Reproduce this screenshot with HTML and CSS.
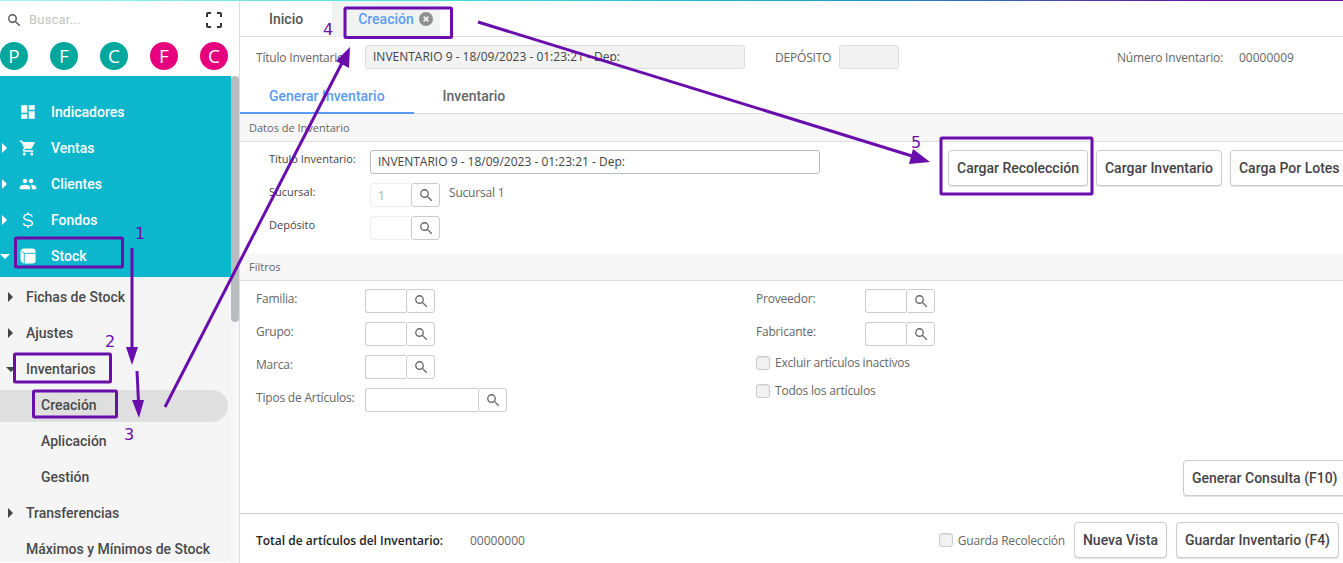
FILE: index.html
```html
<!DOCTYPE html>
<html lang="es">
<head>
<meta charset="utf-8">
<title>Creación de Inventario</title>
<link rel="stylesheet" href="styles.css">
</head>
<body>
<div class="topline"></div>
<div class="shell">
  <aside class="sidebar">
    <div class="side-col">
      <div class="search">
        <svg class="search-ico" viewBox="0 0 16 16"><circle cx="6.3" cy="6.3" r="4.3"/><path d="M9.6 9.6l5 5"/></svg>
        <span class="search-text">Buscar...</span>
        <svg class="full-ico" viewBox="0 0 16 16"><path d="M1 5V2a1 1 0 0 1 1-1h3M11 1h3a1 1 0 0 1 1 1v3M15 11v3a1 1 0 0 1-1 1h-3M5 15H2a1 1 0 0 1-1-1v-3"/></svg>
      </div>
      <div class="avatars">
        <span class="avatar teal">P</span>
        <span class="avatar teal">F</span>
        <span class="avatar teal">C</span>
        <span class="avatar pink">F</span>
        <span class="avatar pink">C</span>
      </div>
      <nav class="menu">
        <a class="mi"><svg class="mi-ico" viewBox="0 0 24 24"><path d="M3 13h8V3H3v10zm0 8h8v-6H3v6zm10 0h8V11h-8v10zm0-18v6h8V3h-8z"/></svg>Indicadores</a>
        <a class="mi"><i class="caret"></i><svg class="mi-ico" viewBox="0 0 24 24"><path d="M7 18c-1.1 0-1.99.9-1.99 2S5.9 22 7 22s2-.9 2-2-.9-2-2-2zM1 2v2h2l3.6 7.59-1.35 2.45c-.16.28-.25.61-.25.96 0 1.1.9 2 2 2h12v-2H7.42c-.14 0-.25-.11-.25-.25l.03-.12.9-1.63h7.45c.75 0 1.41-.41 1.75-1.03l3.58-6.49c.08-.14.12-.31.12-.48 0-.55-.45-1-1-1H5.21l-.94-2H1zm16 16c-1.1 0-1.99.9-1.99 2s.89 2 1.99 2 2-.9 2-2-.9-2-2-2z"/></svg>Ventas</a>
        <a class="mi"><i class="caret"></i><svg class="mi-ico" viewBox="0 0 24 24"><path d="M16 11c1.66 0 2.99-1.34 2.99-3S17.66 5 16 5c-1.66 0-3 1.34-3 3s1.34 3 3 3zm-8 0c1.66 0 2.99-1.34 2.99-3S9.66 5 8 5C6.34 5 5 6.34 5 8s1.34 3 3 3zm0 2c-2.33 0-7 1.17-7 3.5V19h14v-2.5c0-2.33-4.67-3.5-7-3.5zm8 0c-.29 0-.62.02-.97.05 1.16.84 1.97 1.97 1.97 3.45V19h6v-2.5c0-2.33-4.67-3.5-7-3.5z"/></svg>Clientes</a>
        <a class="mi"><i class="caret"></i><svg class="mi-ico dollar" viewBox="0 0 24 24"><path d="M17.500 7.500C17 5.500 15 4.500 12 4.500c-3.300 0-5.500 1.700-5.500 4 0 5 11.500 2.500 11.500 7.500 0 2.300-2.500 3.800-6 3.800-3.200 0-5.500-1.300-6-3.600M12 1.500v3M12 19.800v2.900"/></svg>Fondos</a>
        <a class="mi"><i class="caret down"></i><svg class="mi-ico" viewBox="0 0 24 24"><path d="M7 2h11a4 4 0 0 1 4 4v12a4 4 0 0 1-4 4H8a6 6 0 0 1-6-6V7a5 5 0 0 1 5-5z"/><path class="cube-line" d="M3 5l4 3.500h15M7 8.500V22"/></svg>Stock</a>
      </nav>
      <nav class="submenu">
        <a class="si"><i class="caret dark"></i>Fichas de Stock</a>
        <a class="si"><i class="caret dark"></i>Ajustes</a>
        <a class="si"><i class="caret dark down"></i>Inventarios</a>
        <a class="si child active">Creación</a>
        <a class="si child">Aplicación</a>
        <a class="si child">Gestión</a>
        <a class="si"><i class="caret dark"></i>Transferencias</a>
        <a class="si">Máximos y Mínimos de Stock</a>
      </nav>
    </div>
    <div class="scroll-col">
      <div class="scroll-thumb"></div>
    </div>
  </aside>

  <main class="main">
    <div class="tabs">
      <span class="tab">Inicio</span>
      <span class="tab current">Creación<svg class="close" viewBox="0 0 14 14"><circle cx="7" cy="7" r="7"/><path d="M4.6 4.6l4.8 4.8M9.4 4.6l-4.8 4.8"/></svg></span>
    </div>

    <div class="head">
      <span class="lbl head-lbl">Título Inventario:</span>
      <span class="ro-input title-input">INVENTARIO 9 - 18/09/2023 - 01:23:21 - Dep:</span>
      <span class="lbl dep-lbl">DEPÓSITO</span>
      <span class="ro-input dep-input"></span>
      <span class="lbl num-lbl">Número Inventario:</span>
      <span class="lbl num">00000009</span>
    </div>

    <div class="subtabs">
      <span class="subtab on">Generar Inventario</span>
      <span class="subtab">Inventario</span>
    </div>

    <div class="sec-title">Datos de Inventario</div>
    <section class="datos">
      <div class="datos-form">
        <div class="frow">
          <span class="dlbl">Título Inventario:</span>
          <span class="txt-input wide">INVENTARIO 9 - 18/09/2023 - 01:23:21 - Dep:</span>
        </div>
        <div class="frow">
          <span class="dlbl">Sucursal:</span>
          <span class="lookup soft"><span class="lk-in">1</span><span class="lk-btn"><svg class="mag" viewBox="0 0 16 16"><circle cx="6.3" cy="6.3" r="4.3"/><path d="M9.6 9.6l5 5"/></svg></span></span>
          <span class="lbl suc-name">Sucursal 1</span>
        </div>
        <div class="frow">
          <span class="dlbl">Depósito</span>
          <span class="lookup soft"><span class="lk-in"></span><span class="lk-btn"><svg class="mag" viewBox="0 0 16 16"><circle cx="6.3" cy="6.3" r="4.3"/><path d="M9.6 9.6l5 5"/></svg></span></span>
        </div>
      </div>
      <div class="datos-btns">
        <button class="btn">Cargar Recolección</button>
        <button class="btn">Cargar Inventario</button>
        <button class="btn">Carga Por Lotes</button>
      </div>
    </section>

    <div class="sec-title filtros-title">Filtros</div>
    <section class="filtros">
      <div class="fcol left">
        <div class="frow"><span class="flbl">Familia:</span><span class="lookup"><span class="lk-in"></span><span class="lk-btn"><svg class="mag" viewBox="0 0 16 16"><circle cx="6.3" cy="6.3" r="4.3"/><path d="M9.6 9.6l5 5"/></svg></span></span></div>
        <div class="frow"><span class="flbl">Grupo:</span><span class="lookup"><span class="lk-in"></span><span class="lk-btn"><svg class="mag" viewBox="0 0 16 16"><circle cx="6.3" cy="6.3" r="4.3"/><path d="M9.6 9.6l5 5"/></svg></span></span></div>
        <div class="frow"><span class="flbl">Marca:</span><span class="lookup"><span class="lk-in"></span><span class="lk-btn"><svg class="mag" viewBox="0 0 16 16"><circle cx="6.3" cy="6.3" r="4.3"/><path d="M9.6 9.6l5 5"/></svg></span></span></div>
        <div class="frow"><span class="flbl">Tipos de Artículos:</span><span class="lookup long"><span class="lk-in"></span><span class="lk-btn"><svg class="mag" viewBox="0 0 16 16"><circle cx="6.3" cy="6.3" r="4.3"/><path d="M9.6 9.6l5 5"/></svg></span></span></div>
      </div>
      <div class="fcol">
        <div class="frow"><span class="flbl">Proveedor:</span><span class="lookup"><span class="lk-in"></span><span class="lk-btn"><svg class="mag" viewBox="0 0 16 16"><circle cx="6.3" cy="6.3" r="4.3"/><path d="M9.6 9.6l5 5"/></svg></span></span></div>
        <div class="frow"><span class="flbl">Fabricante:</span><span class="lookup"><span class="lk-in"></span><span class="lk-btn"><svg class="mag" viewBox="0 0 16 16"><circle cx="6.3" cy="6.3" r="4.3"/><path d="M9.6 9.6l5 5"/></svg></span></span></div>
        <div class="check-row"><i class="check"></i><span class="lbl">Excluir artículos inactivos</span></div>
        <div class="check-row second"><i class="check"></i><span class="lbl">Todos los artículos</span></div>
      </div>
    </section>

    <div class="consulta"><button class="btn">Generar Consulta (F10)</button></div>

    <footer class="foot">
      <strong class="total">Total de artículos del Inventario:</strong>
      <span class="lbl num">00000000</span>
      <span class="foot-right">
        <i class="check"></i><span class="lbl guarda">Guarda Recolección</span>
        <button class="btn">Nueva Vista</button>
        <button class="btn">Guardar Inventario (F4)</button>
      </span>
    </footer>
  </main>
</div>

<svg class="notes" viewBox="0 0 1343 563" width="1343" height="563">
  <g class="boxes">
    <rect x="15.5" y="238" width="107" height="29" rx="1"/>
    <rect x="14.5" y="354" width="96" height="28" rx="1"/>
    <rect x="33.5" y="391" width="83" height="26" rx="1"/>
    <rect x="345" y="8" width="106.500" height="29.500" rx="1"/>
    <rect x="941" y="138" width="151" height="56" rx="1"/>
  </g>
  <g class="lines">
    <path d="M132 248V350"/>
    <path d="M137 371L138.500 402"/>
    <path d="M165 407L345 57"/>
    <path d="M478 22L912 156"/>
  </g>
  <g class="heads">
    <path d="M126 347H138L132 365z"/>
    <path d="M132 400H144L139 418z"/>
    <path d="M350 47L349 68L336 61z"/>
    <path d="M930 162L909 164L913 149z"/>
  </g>
  <g class="nums">
    <text x="135" y="239">1</text>
    <text x="105" y="347">2</text>
    <text x="124" y="440">3</text>
    <text x="323" y="35">4</text>
    <text x="911" y="148">5</text>
  </g>
</svg>
</body>
</html>
```
FILE: styles.css
```css
* { box-sizing: border-box; }
html, body { margin: 0; padding: 0; width: 1343px; height: 563px; overflow: hidden; background: #fff; }
body { position: relative; font-family: "Open Sans", "Liberation Sans", sans-serif; font-size: 12px; color: #555; }

.topline { height: 1px; background: linear-gradient(90deg, #a8f3f3 0, #3fdcdc 35%, #1b93c4 65%, #6a0dad 90%); }
.shell { display: flex; height: 562px; }

/* sidebar */
.sidebar { width: 240px; flex: none; display: flex; border-right: 1px solid #ddd; background: #fff; }
.side-col { width: 231px; flex: none; display: flex; flex-direction: column; height: 562px; overflow: hidden; }
.search { height: 37px; flex: none; display: flex; align-items: center; padding: 0 9px 0 7px; }
.search-ico { width: 14px; height: 14px; fill: none; stroke: #555; stroke-width: 1.6; }
.search-text { margin-left: 8px; font: 400 13px "Roboto", sans-serif; color: #c4c4c4; letter-spacing: .2px; }
.full-ico { margin-left: auto; width: 16px; height: 16px; fill: none; stroke: #333; stroke-width: 2; }
.avatars { display: flex; flex: none; gap: 22px; height: 38px; padding-top: 4px; }
.avatar { width: 28px; height: 28px; border-radius: 50%; color: #fff; font: 400 19px/28px "Open Sans", sans-serif; text-align: center; }
.teal { background: #00a79d; }
.pink { background: #e6007e; }

.menu { flex: none; background: #0cb6cc; height: 201px; padding-top: 18px; }
.mi { position: relative; display: flex; align-items: center; height: 36px; padding-left: 19px; font: 500 14px "Roboto", sans-serif; color: #fff; }
.mi-ico { width: 18px; height: 18px; margin-right: 14px; fill: #fff; flex: none; }
.mi-ico.dollar { fill: none; stroke: #fff; stroke-width: 1.9; }
.cube-line { fill: none; stroke: #0cb6cc; stroke-width: 1.2; }
.caret { position: absolute; left: 2px; top: 13px; width: 0; height: 0; border-left: 5px solid #fff; border-top: 5px solid transparent; border-bottom: 5px solid transparent; }
.caret.down { left: 0; top: 16px; border-left: 5px solid transparent; border-right: 5px solid transparent; border-top: 5px solid #fff; border-bottom: 0; }
.caret.dark { left: 8px; border-left-color: #444; }
.caret.dark.down { left: 6px; border-left-color: transparent; border-top-color: #444; }

.submenu { flex: none; height: 285px; background: #f5f5f5; padding-top: 2px; }
.si { position: relative; display: flex; align-items: center; height: 36px; padding-left: 26px; font: 500 14px "Roboto", sans-serif; color: #4a4a4a; white-space: nowrap; }
.child { padding-left: 41px; }
.active::before { content: ""; position: absolute; left: 0; top: 3px; width: 228px; height: 32px; background: #dfdfdf; border-radius: 0 16px 16px 0; }
.si.active { isolation: isolate; }
.si.active::before { z-index: -1; }

.scroll-col { width: 8px; flex: none; margin-top: 75px; background: #f7f7f7; }
.scroll-thumb { height: 246px; background: #b9bcc0; border-radius: 4px; }

/* main */
.main { flex: 1; min-width: 0; overflow: hidden; display: flex; flex-direction: column; }
.lbl { font: 400 12px "Open Sans", sans-serif; letter-spacing: -.2px; color: #666; white-space: nowrap; }
.lbl.num { letter-spacing: 0; }

.tabs { height: 36px; flex: none; display: flex; border-bottom: 1px solid #ddd; padding-left: 29px; }
.tab { font: 500 14px/37px "Roboto", sans-serif; color: #555; }
.tab.current { display: flex; margin-left: 29px; width: 108px; padding-left: 26px; margin-bottom: -1px; background: #f1f3f3; color: #5b9bf8; height: 36px; align-items: flex-start; }
.close { width: 14px; height: 14px; margin: 11px 0 0 5px; }
.close circle { fill: #8f8f8f; }
.close path { fill: none; stroke: #f1f3f3; stroke-width: 1.8; }

.head { height: 43px; flex: none; display: flex; align-items: center; padding: 0 0 3px 16px; }
.head-lbl { width: 109px; }
.ro-input { height: 24px; flex: none; background: #f3f3f3; border: 1px solid #ddd; border-radius: 3px; font: 400 12px/22px "Open Sans", sans-serif; color: #444; white-space: nowrap; }
.title-input { width: 380px; padding-left: 7px; }
.dep-lbl { margin-left: 30px; width: 64px; }
.dep-input { width: 60px; }
.num-lbl { margin-left: 218px; width: 122px; }

.subtabs { height: 34px; flex: none; display: flex; border-bottom: 1px solid #ddd; }
.subtab { font: 500 14px/32px "Roboto", sans-serif; color: #666; padding: 0 29px; height: 34px; }
.subtab.on { color: #5b9bf8; border-bottom: 2px solid #5b9bf8; }

.sec-title { height: 28px; flex: none; background: #f7f7f7; border-bottom: 1px solid #ddd; padding-left: 9px; font: 400 11px/27px "Open Sans", sans-serif; color: #666; }
.filtros-title { height: 27px; line-height: 26px; }

.datos { height: 112px; flex: none; display: flex; padding-top: 8px; }
.datos-form { width: 708px; flex: none; padding-left: 29px; }
.frow { display: flex; height: 24px; margin-bottom: 9px; }
.dlbl { width: 101px; flex: none; font: 400 11px/17px "Open Sans", sans-serif; color: #444; }
.txt-input { height: 24px; border: 1px solid #bbb; border-radius: 3px; font: 400 12px/22px "Open Sans", sans-serif; color: #444; padding-left: 7px; }
.wide { width: 450px; }
.suc-name { margin-left: 9px; line-height: 19px; }
.datos-btns { display: flex; gap: 8px; flex: none; }

.lookup { display: flex; width: 70px; height: 24px; flex: none; }
.lookup.long { width: 142px; }
.lk-in { flex: 1; border: 1px solid #ccc; border-right: 0; border-radius: 3px 0 0 3px; font: 400 12px/24px "Open Sans", sans-serif; color: #aaa; padding-left: 7px; }
.lk-btn { width: 29px; flex: none; border: 1px solid #ccc; border-radius: 3px; display: flex; align-items: center; justify-content: center; background: #fff; }
.lookup.soft .lk-in { border-color: #eee; }
.mag { width: 14px; height: 14px; fill: none; stroke: #666; stroke-width: 1.5; }

.btn { height: 36px; padding: 0 8px; background: #fff; border: 1px solid #ccc; border-radius: 4px; font: 500 14px "Roboto", sans-serif; color: #444; white-space: nowrap; box-shadow: 0 1px 1px rgba(0,0,0,.12); flex: none; }

.filtros { display: flex; flex: none; padding: 8px 0 0 16px; }
.fcol { display: flex; flex-direction: column; }
.fcol.left { width: 500px; }
.flbl { width: 109px; flex: none; font: 400 12px/20px "Open Sans", sans-serif; letter-spacing: -.2px; color: #666; white-space: nowrap; }
.check-row { display: flex; align-items: center; gap: 5px; height: 14px; margin-top: 1px; }
.check-row.second { margin-top: 14px; }
.check-row .lbl { margin-bottom: 2px; }
.check { width: 14px; height: 14px; flex: none; border: 1px solid #ccc; border-radius: 3px; background: #f2f2f2; box-shadow: inset 0 1px 1px rgba(0,0,0,.08); }

.consulta { margin-top: auto; padding: 0 0 17px 943px; display: flex; flex: none; }

.foot { height: 50px; flex: none; border-top: 1px solid #ccc; display: flex; align-items: center; padding: 3px 4px 0 16px; }
.total { font: 600 12px "Open Sans", sans-serif; color: #222; width: 214px; white-space: nowrap; }
.foot-right { margin-left: auto; display: flex; align-items: center; gap: 9px; }
.guarda { margin-left: -4px; }

/* annotations drawn over the screenshot */
.notes { position: absolute; left: 0; top: 0; pointer-events: none; }
.boxes rect { fill: none; stroke: #6a0dad; stroke-width: 3; }
.lines path { fill: none; stroke: #6a0dad; stroke-width: 3; }
.heads path { fill: #6a0dad; }
.nums text { fill: #6a0dad; font: 400 16px "DejaVu Sans", sans-serif; }
```
